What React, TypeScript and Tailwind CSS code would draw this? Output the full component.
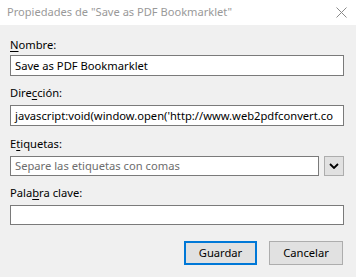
import React from "react";

const font = { fontFamily: '"Noto Sans", "Open Sans", sans-serif' };

function U({ children }: { children: React.ReactNode }) {
  return <span className="underline underline-offset-[2px] decoration-1">{children}</span>;
}

export default function App() {
  return (
    <div className="w-[356px] h-[277px] bg-[#f0f0f0] text-[11.2px] text-black overflow-hidden" style={font}>
      <div className="h-[25px] bg-white flex items-center justify-between pl-[7px] pr-[9px]">
        <span className="text-[#999999] text-[11.1px]">Propiedades de "Save as PDF Bookmarklet"</span>
        <svg width="11" height="11" viewBox="0 0 11 11">
          <path d="M0.5 0.5 L10.5 10.5 M10.5 0.5 L0.5 10.5" stroke="#8a8a8a" strokeWidth="1" />
        </svg>
      </div>
      <div className="pl-[10px] pr-[12px]">
        <div className="mt-[12px] h-[16px] leading-[16px]">
          <U>N</U>ombre:
        </div>
        <div className="mt-[2px] h-[21px] border border-[#7a7a7a] bg-white px-[4px] leading-[19px] whitespace-nowrap overflow-hidden">
          Save as PDF Bookmarklet
        </div>
        <div className="mt-[9px] h-[16px] leading-[16px]">
          Dire<U>c</U>ción:
        </div>
        <div className="mt-[4px] h-[21px] border border-[#7a7a7a] bg-white pl-[4px] leading-[19px] whitespace-nowrap overflow-hidden">
          javascript:void(window.open('http://www.web2pdfconvert.co
        </div>
        <div className="mt-[10px] h-[16px] leading-[16px]">
          E<U>t</U>iquetas:
        </div>
        <div className="mt-[4px] flex gap-[5px] items-start">
          <div className="flex-1 h-[20px] border border-[#7a7a7a] bg-white px-[4px] leading-[18px] text-[#6d6d6d] whitespace-nowrap overflow-hidden">
            Separe las etiquetas con comas
          </div>
          <div className="w-[20px] h-[20px] border border-[#adadad] bg-[#e1e1e1] flex items-center justify-center">
            <svg width="10" height="6" viewBox="0 0 10 6">
              <path d="M1 1 L5 5 L9 1" stroke="#000" strokeWidth="1.8" fill="none" />
            </svg>
          </div>
        </div>
        <div className="mt-[9px] h-[16px] leading-[16px]">
          Pala<U>b</U>ra clave:
        </div>
        <div className="mt-[4px] h-[20px] border border-[#7a7a7a] bg-white" />
        <div className="mt-[16px] flex justify-end gap-[12px] pr-[1px]">
          <button className="w-[73px] h-[24px] border-2 border-[#0078d7] bg-[#e1e1e1] leading-[20px]">
            Guardar
          </button>
          <button className="w-[74px] h-[24px] border border-[#adadad] bg-[#e1e1e1] leading-[22px]">
            Cancelar
          </button>
        </div>
      </div>
    </div>
  );
}
